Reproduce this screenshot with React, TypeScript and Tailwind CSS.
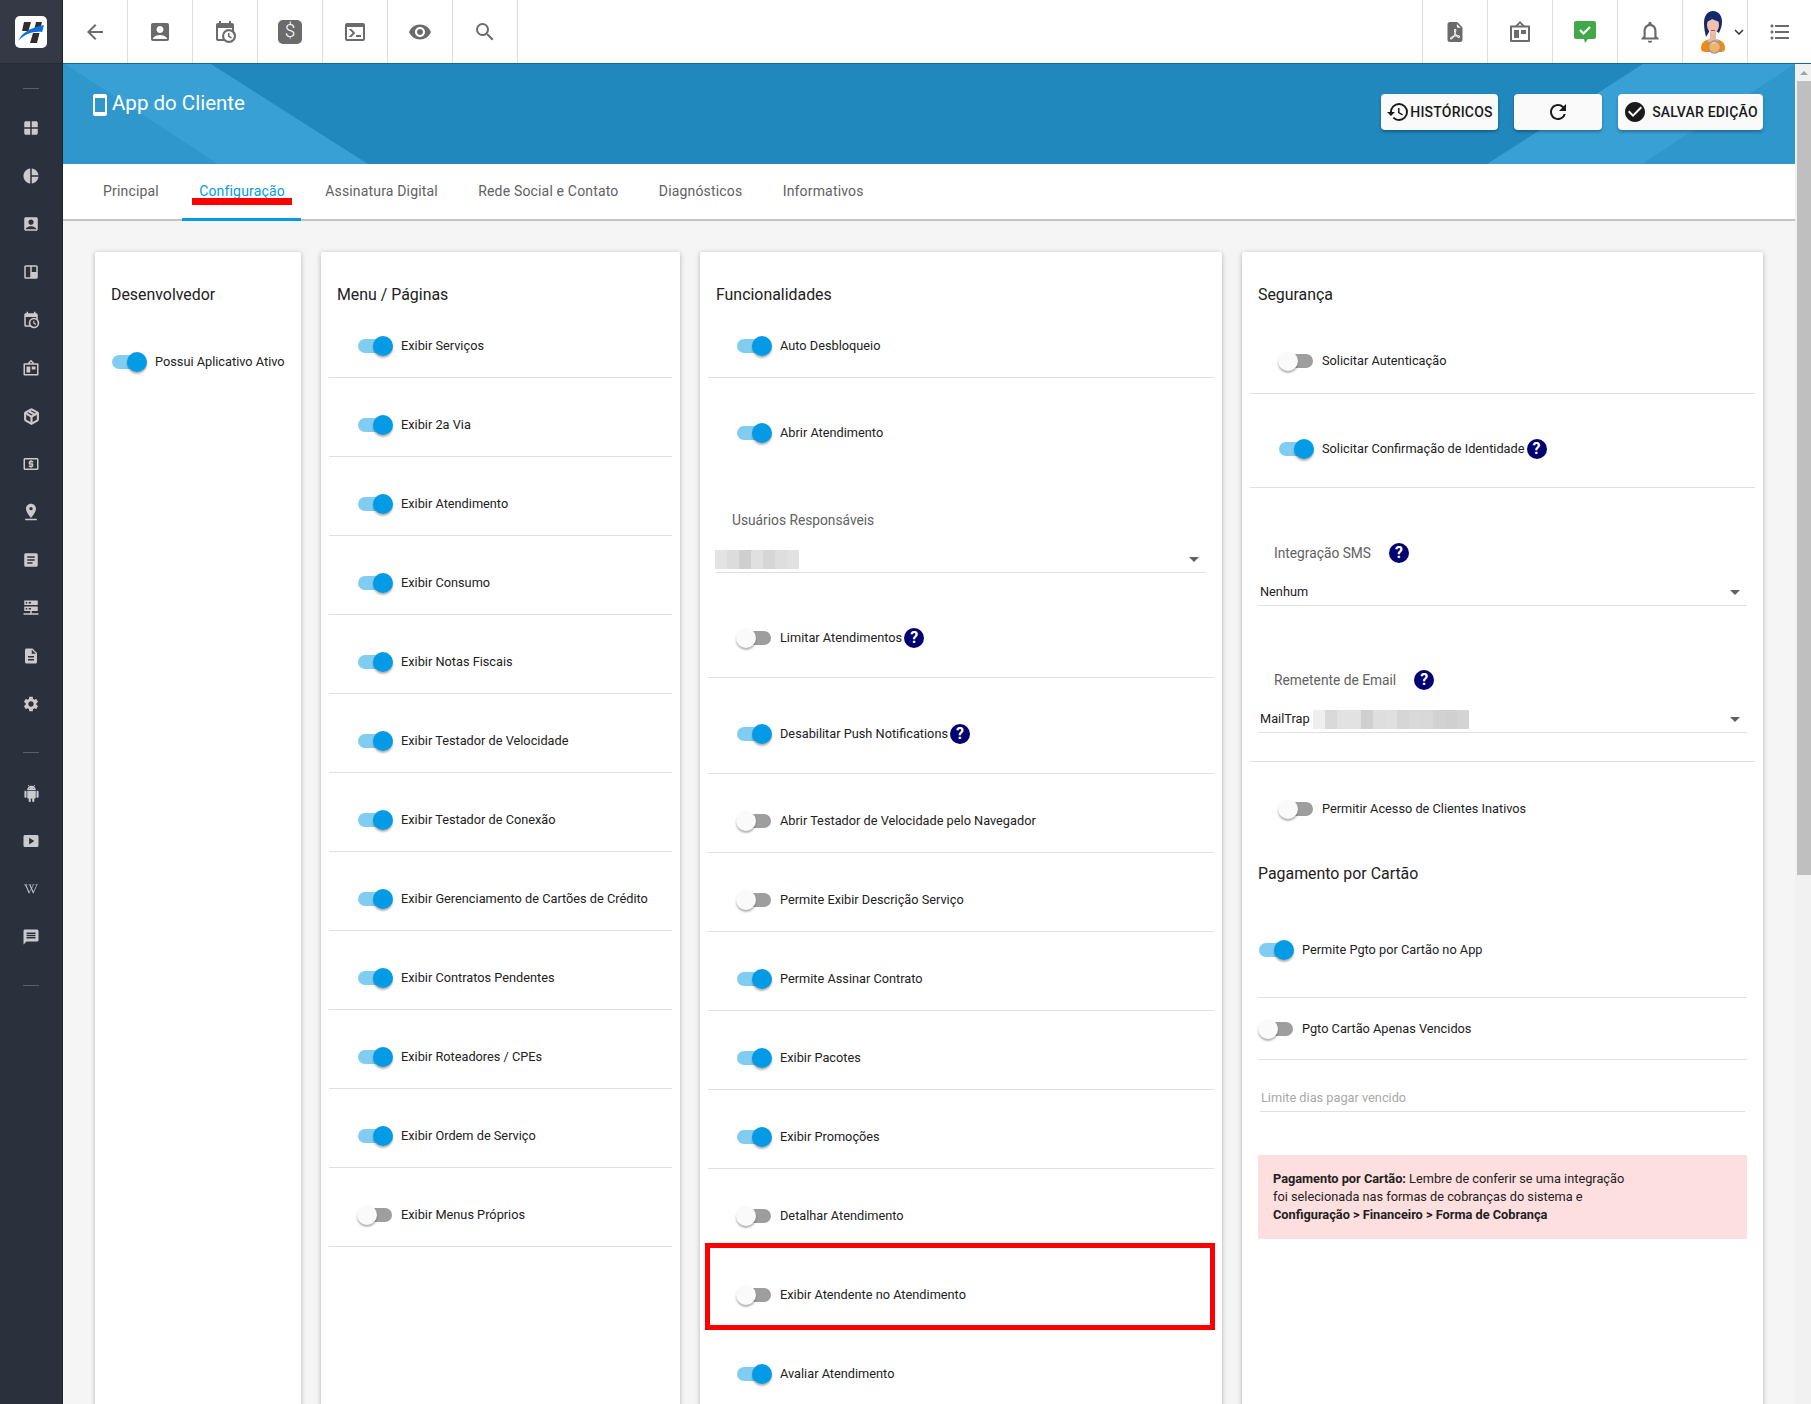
import {
  MdAccountBox,
  MdArrowBack,
  MdArticle,
  MdCheckCircle,
  MdDescription,
  MdFormatListBulleted,
  MdHistory,
  MdLocalAtm,
  MdMessage,
  MdNotificationsNone,
  MdPieChart,
  MdPinDrop,
  MdRefresh,
  MdSearch,
  MdSettings,
  MdSmartDisplay,
  MdSmartphone,
  MdVisibility,
  MdWindow,
} from "react-icons/md";
import { BsFileEarmarkPdfFill } from "react-icons/bs";
import { FaWikipediaW } from "react-icons/fa";
import { LuPackage } from "react-icons/lu";
import type { ReactNode } from "react";

type IconProps = { size?: number; className?: string };

function CalendarClockIcon({ size = 24, className }: IconProps) {
  return (
    <svg width={size} height={size} viewBox="0 0 24 24" fill="currentColor" className={className}>
      <path d="M15,13H16.5V15.82L18.94,17.23L18.19,18.53L15,16.69V13M19,8H5V19H9.67C9.24,18.09 9,17.07 9,16A7,7 0 0,1 16,9C17.07,9 18.09,9.24 19,9.67V8M5,21C3.89,21 3,20.1 3,19V5C3,3.89 3.89,3 5,3H6V1H8V3H16V1H18V3H19A2,2 0 0,1 21,5V11.1C22.24,12.36 23,14.09 23,16A7,7 0 0,1 16,23C14.09,23 12.36,22.24 11.1,21H5M16,11.15A4.85,4.85 0 0,0 11.15,16C11.15,18.68 13.32,20.85 16,20.85A4.85,4.85 0 0,0 20.85,16C20.85,13.32 18.68,11.15 16,11.15Z" />
    </svg>
  );
}

function ConsoleIcon({ size = 24, className }: IconProps) {
  return (
    <svg width={size} height={size} viewBox="0 0 24 24" fill="currentColor" className={className}>
      <path d="M20,19V7H4V19H20M20,3A2,2 0 0,1 22,5V19A2,2 0 0,1 20,21H4A2,2 0 0,1 2,19V5C2,3.89 2.9,3 4,3H20M13,17V15H18V17H13M9.58,13L5.57,9H8.4L11.7,12.3C12.09,12.69 12.09,13.33 11.7,13.72L8.42,17H5.59L9.58,13Z" />
    </svg>
  );
}

function BoardIcon({ size = 24, className }: IconProps) {
  return (
    <svg width={size} height={size} viewBox="0 0 24 24" fill="currentColor" className={className}>
      <path d="M12 1 16.5 5.5H21a1 1 0 0 1 1 1V21a1 1 0 0 1-1 1H3a1 1 0 0 1-1-1V6.500a1 1 0 0 1 1-1h4.500L12 1Zm0 2.600L10.100 5.500h3.800L12 3.600ZM4 7.500V20h16V7.500H4Z" />
      <path d="M6 10h5v8H6zM13 10h5v4h-5z" />
    </svg>
  );
}

function KanbanBoxIcon({ size = 24, className }: IconProps) {
  return (
    <svg width={size} height={size} viewBox="0 0 24 24" fill="currentColor" className={className}>
      <path d="M5 3h14a2 2 0 0 1 2 2v14a2 2 0 0 1-2 2H5a2 2 0 0 1-2-2V5a2 2 0 0 1 2-2Zm0 2v14h6V5H5Zm8 0v7h6V5h-6Z" />
    </svg>
  );
}

function ServerIcon({ size = 24, className }: IconProps) {
  return (
    <svg width={size} height={size} viewBox="0 0 24 24" fill="currentColor" className={className}>
      <path d="M3 2h18v6H3zM3 10h18v6H3zM11 16h2v3h9v2H2v-2h9z" />
      <path fill="#2b303d" d="M5 4h2v2H5zM9 4h3v2H9zM5 12h2v2H5zM9 12h3v2H9z" />
    </svg>
  );
}

function AndroidIcon({ size = 24, className }: IconProps) {
  return (
    <svg width={size} height={size} viewBox="0 0 24 24" fill="currentColor" className={className}>
      <path d="M6 18c0 .55.45 1 1 1h1v3.500c0 .83.67 1.500 1.500 1.500s1.500-.67 1.500-1.500V19h2v3.500c0 .83.67 1.500 1.500 1.500s1.500-.67 1.500-1.500V19h1c.55 0 1-.45 1-1V8H6v10zM3.500 8C2.670 8 2 8.670 2 9.500v7c0 .83.67 1.500 1.500 1.500S5 17.330 5 16.500v-7C5 8.670 4.330 8 3.500 8zm17 0c-.83 0-1.500.67-1.500 1.500v7c0 .83.67 1.500 1.500 1.500s1.500-.67 1.500-1.500v-7c0-.83-.67-1.500-1.500-1.500zm-4.970-5.840l1.300-1.300c.2-.2.2-.51 0-.71-.2-.2-.51-.2-.71 0l-1.480 1.480C13.850 1.230 12.950 1 12 1c-.96 0-1.860.23-2.660.63L7.850.15c-.2-.2-.51-.2-.71 0-.2.2-.2.51 0 .71l1.310 1.310C6.970 3.260 6 5.010 6 7h12c0-1.990-.97-3.750-2.470-4.840zM10 5H9V4h1v1zm5 0h-1V4h1v1z" />
    </svg>
  );
}

function ChatCheckIcon() {
  return (
    <svg width={24} height={24} viewBox="0 0 24 24">
      <path
        fill="#43a847"
        d="M3 1h18a2 2 0 0 1 2 2v14a2 2 0 0 1-2 2h-6l-3 4-1-4H3a2 2 0 0 1-2-2V3a2 2 0 0 1 2-2Z"
      />
      <path d="m7 10 3.500 3.500L17 7" fill="none" stroke="#fff" strokeWidth="2.200" />
    </svg>
  );
}

function AvatarIcon() {
  return (
    <svg width={26} height={44} viewBox="0 0 26 44">
      <path fill="#f08a12" d="M1 38c0-6 5-9 12-9s12 3 12 9c0 3-2 4-4 4H5c-2 0-4-1-4-4Z" />
      <path fill="#e8b9a5" d="M10 22h6v7l3 2-6 3-6-3 3-2z" />
      <path fill="#16296b" d="M13 1c6 0 9 5 9 11 0 5-2 8-3 11l-3-2V12H9v10l-3 5c-1-4-2-9-2-14C4 6 7 1 13 1Z" />
      <ellipse cx="13" cy="15" rx="6" ry="8" fill="#efc3ae" />
      <path fill="#16296b" d="M6 12c2-4 6-6 8-6 3 0 5 3 6 6-3-1-6-2-8-3-1 1-3 2-6 3Z" />
      <rect x="11" y="20" width="4" height="1" fill="#c8374a" />
      <circle cx="14.500" cy="37" r="6" fill="#ffffff" fillOpacity="0.35" stroke="#8a9aa0" strokeWidth="1.300" />
    </svg>
  );
}

function LogoMark() {
  return (
    <svg width={32} height={32} viewBox="0 0 32 32">
      <rect width="32" height="32" rx="5" fill="#ffffff" />
      <path fill="#2f2f31" d="M9 6h7l-2.500 9H7ZM18 17h6.500L22 27h-7Z" />
      <path fill="#2f2f31" d="M21 6h6l-1 4-6.500 2.500Z" />
      <path fill="#0f6fde" d="M3 25c4-8 11-13 26-16l-1.800 7C18 15 10 18 3 25Z" />
    </svg>
  );
}

function Toggle({ on }: { on: boolean }) {
  return (
    <span className="relative block h-[20px] w-[36px] shrink-0">
      <span
        className={`absolute left-[1px] top-[3px] h-[14px] w-[34px] rounded-full ${
          on ? "bg-[#81cdf2]" : "bg-[#9e9e9e]"
        }`}
      />
      <span
        className={`absolute top-0 h-[20px] w-[20px] rounded-full shadow-[0_2px_2px_rgba(0,0,0,0.3)] ${
          on ? "left-[16px] bg-[#039be5]" : "left-0 bg-[#fafafa]"
        }`}
      />
    </span>
  );
}

function Help({ className = "" }: { className?: string }) {
  return (
    <span
      className={`flex h-[20px] w-[20px] shrink-0 items-center justify-center rounded-full bg-[#000070] text-[16px] font-bold leading-none text-white ${className}`}
    >
      ?
    </span>
  );
}

function Row({
  label,
  on = false,
  help = false,
  size = "h-[79px] pt-[15px]",
  indent = "mx-[8px] pl-[28px]",
  border = true,
}: {
  label: string;
  on?: boolean;
  help?: boolean;
  size?: string;
  indent?: string;
  border?: boolean;
}) {
  return (
    <div className={`flex items-center ${size} ${indent} ${border ? "border-b border-[#e0e0e0]" : ""}`}>
      <Toggle on={on} />
      <span className="ml-[8px] text-[12.75px] text-[#212121]">{label}</span>
      {help ? <Help className="ml-[2px]" /> : null}
    </div>
  );
}

function Field({
  label,
  helpIcon = false,
  children,
}: {
  label: string;
  helpIcon?: boolean;
  children: ReactNode;
}) {
  return (
    <div>
      <div className="flex h-[24px] items-center pl-[32px] text-[13.75px] text-[#616161]">
        {label}
        {helpIcon ? <Help className="ml-[18px]" /> : null}
      </div>
      <div className="mx-[16px] mt-[5px] flex h-[36px] items-center border-b border-[#e0e0e0] pl-[2px] pr-[7px] pt-[9px] text-[12.75px] text-[#212121]">
        {children}
        <span className="ml-auto h-0 w-0 border-x-[5px] border-t-[5px] border-x-transparent border-t-[#616161]" />
      </div>
    </div>
  );
}

function Card({ title, children }: { title: string; children: ReactNode }) {
  return (
    <section className="rounded-[2px] bg-white pt-[31px] shadow-[0_1px_5px_rgba(0,0,0,0.28)]">
      <h2 className="mb-[-8px] h-[24px] pl-[16px] text-[15.9px] font-normal leading-[24px] text-[#212121]">
        {title}
      </h2>
      {children}
    </section>
  );
}

const menuRows = [
  { label: "Exibir Serviços", on: true },
  { label: "Exibir 2a Via", on: true },
  { label: "Exibir Atendimento", on: true },
  { label: "Exibir Consumo", on: true },
  { label: "Exibir Notas Fiscais", on: true },
  { label: "Exibir Testador de Velocidade", on: true },
  { label: "Exibir Testador de Conexão", on: true },
  { label: "Exibir Gerenciamento de Cartões de Crédito", on: true },
  { label: "Exibir Contratos Pendentes", on: true },
  { label: "Exibir Roteadores / CPEs", on: true },
  { label: "Exibir Ordem de Serviço", on: true },
  { label: "Exibir Menus Próprios", on: false },
];

const sideTop = [
  <MdWindow size={18} />,
  <MdPieChart size={18} />,
  <MdAccountBox size={18} />,
  <KanbanBoxIcon size={18} />,
  <CalendarClockIcon size={18} />,
  <BoardIcon size={18} />,
  <LuPackage size={17} strokeWidth={3} />,
  <MdLocalAtm size={18} />,
  <MdPinDrop size={20} />,
  <MdArticle size={18} />,
  <ServerIcon size={18} />,
  <MdDescription size={18} />,
  <MdSettings size={18} />,
];

const sideBottom = [
  <AndroidIcon size={17} />,
  <MdSmartDisplay size={18} />,
  <FaWikipediaW size={14} />,
  <MdMessage size={18} />,
];

const tabs = ["Principal", "Configuração", "Assinatura Digital", "Rede Social e Contato", "Diagnósticos", "Informativos"];

function Sidebar() {
  return (
    <aside className="flex w-[63px] shrink-0 flex-col bg-[#2b303d] pr-[1px] text-[#c9cacd] shadow-[inset_-1px_0_0_#1d2430]">
      <div className="flex h-[64px] items-center border-b border-[#262a35] bg-[#353945] pl-[15px]">
        <LogoMark />
      </div>
      <div className="mx-auto mt-[24px] h-px w-[16px] bg-[#5a5e69]" />
      <div className="mt-[15px]">
        {sideTop.map((icon, i) => (
          <div key={i} className="flex h-[48px] items-center justify-center">
            {icon}
          </div>
        ))}
      </div>
      <div className="mx-auto mt-[24px] h-px w-[16px] bg-[#5a5e69]" />
      <div className="mt-[16px]">
        {sideBottom.map((icon, i) => (
          <div key={i} className="flex h-[48px] items-center justify-center">
            {icon}
          </div>
        ))}
      </div>
      <div className="mx-auto mt-[24px] h-px w-[16px] bg-[#5a5e69]" />
    </aside>
  );
}

function TopCell({ children, left = false, width = "w-[65px]" }: { children: ReactNode; left?: boolean; width?: string }) {
  return (
    <div
      className={`flex h-full ${width} items-center justify-center border-[#dedede] text-[#6b6b6b] ${
        left ? "border-l" : "border-r"
      }`}
    >
      {children}
    </div>
  );
}

function TopBar() {
  return (
    <header className="flex h-[64px] shrink-0 items-stretch border-b border-[#0f6a98] bg-white">
      <TopCell>
        <MdArrowBack size={24} />
      </TopCell>
      <TopCell>
        <MdAccountBox size={24} />
      </TopCell>
      <TopCell>
        <CalendarClockIcon />
      </TopCell>
      <TopCell>
        <span className="flex h-[24px] w-[24px] items-center justify-center rounded-[5px] bg-[#6b6b6b] text-[19px] font-light text-white">
          $
        </span>
      </TopCell>
      <TopCell>
        <ConsoleIcon />
      </TopCell>
      <TopCell>
        <MdVisibility size={24} />
      </TopCell>
      <TopCell>
        <MdSearch size={24} />
      </TopCell>
      <div className="ml-auto flex">
        <TopCell left>
          <BsFileEarmarkPdfFill size={20} />
        </TopCell>
        <TopCell left>
          <BoardIcon />
        </TopCell>
        <TopCell left>
          <ChatCheckIcon />
        </TopCell>
        <TopCell left>
          <MdNotificationsNone size={26} />
        </TopCell>
        <TopCell left>
          <div className="relative flex w-full items-center pl-[17px]">
            <AvatarIcon />
            <svg width={10} height={6} viewBox="0 0 10 6" className="absolute right-[3px] top-[calc(50%-3px)]">
              <path d="m1 1 4 4 4-4" fill="none" stroke="#333" strokeWidth="1.500" />
            </svg>
          </div>
        </TopCell>
        <TopCell left width="w-[64px]">
          <MdFormatListBulleted size={24} />
        </TopCell>
      </div>
    </header>
  );
}

function PageHeader() {
  return (
    <div className="relative flex h-[100px] shrink-0 items-start overflow-hidden bg-[#2188bd]">
      <svg className="absolute inset-0 h-full w-full" viewBox="0 0 1732 100" preserveAspectRatio="none">
        <path d="M0 0H148L305 100H0Z" fill="#38a0d5" />
        <path d="M0 0H2L155 100H0Z" fill="#2f97cc" />
        <path d="M1580 0H1732V100H1424Z" fill="#38a0d5" />
        <path d="M1732 0V100H1579Z" fill="#2f97cc" />
      </svg>
      <div className="relative ml-[25px] mt-[28px] flex items-center text-white">
        <MdSmartphone size={24} />
        <h1 className="-mt-[3px] text-[20.5px] font-normal leading-[28px]">App do Cliente</h1>
      </div>
      <div className="relative ml-auto mr-[32px] mt-[30px] flex gap-[16px] text-[14px] font-medium tracking-[0.2px] text-[#1a1a1a]">
        <button className="flex h-[36px] w-[117px] items-center justify-center rounded-[4px] bg-[#fafafa] shadow-[0_2px_3px_rgba(0,0,0,0.3)]">
          <MdHistory size={24} />
          HISTÓRICOS
        </button>
        <button className="flex h-[36px] w-[88px] items-center justify-center rounded-[4px] bg-[#fafafa] shadow-[0_2px_3px_rgba(0,0,0,0.3)]">
          <MdRefresh size={24} />
        </button>
        <button className="flex h-[36px] w-[145px] items-center justify-center gap-[5px] rounded-[4px] bg-[#fafafa] shadow-[0_2px_3px_rgba(0,0,0,0.3)]">
          <MdCheckCircle size={24} />
          SALVAR EDIÇÃO
        </button>
      </div>
    </div>
  );
}

function Tabs() {
  return (
    <nav className="flex h-[57px] shrink-0 items-start gap-[40.3px] border-b-2 border-[#c4c4c4] bg-white pl-[40px] pt-[17px] text-[14px] leading-[20px] tracking-[0.17px] text-[#616161]">
      {tabs.map((tab) =>
        tab === "Configuração" ? (
          <span key={tab} className="relative text-[#039be5]">
            {tab}
            <span className="absolute left-[-7px] right-[-7px] top-[17px] h-[7px] bg-[#ff0000]" />
            <span className="absolute left-[-17px] right-[-16px] top-[37px] h-[3px] bg-[#039be5]" />
          </span>
        ) : (
          <span key={tab}>{tab}</span>
        ),
      )}
    </nav>
  );
}

function Blur({ shades }: { shades: string[] }) {
  return (
    <span className="flex h-[19px]">
      {shades.map((shade, i) => (
        <span key={i} className={`h-full w-[12px] ${shade}`} />
      ))}
    </span>
  );
}

function Content() {
  return (
    <main className="min-h-0 flex-1 overflow-hidden bg-[#f5f5f5] px-[32px] pt-[31px]">
      <div className="grid h-[1200px] grid-cols-[206px_359px_522px_521px] gap-[20px]">
        <Card title="Desenvolvedor">
          <Row label="Possui Aplicativo Ativo" on border={false} size="h-[95px] pt-[30px]" indent="pl-[16px]" />
        </Card>

        <Card title="Menu / Páginas">
          {menuRows.map((row) => (
            <Row key={row.label} label={row.label} on={row.on} />
          ))}
        </Card>

        <Card title="Funcionalidades">
          <Row label="Auto Desbloqueio" on />
          <Row label="Abrir Atendimento" on border={false} size="h-[110px]" />
          <div className="mt-[20px]">
            <Field label="Usuários Responsáveis">
              <span className="-ml-[3px]">
                <Blur shades={["bg-[#e3e3e3]", "bg-[#dcdcdc]", "bg-[#cfcfcf]", "bg-[#e0e0e0]", "bg-[#d6d6d6]", "bg-[#dedede]", "bg-[#e2e2e2]"]} />
              </span>
            </Field>
          </div>
          <Row label="Limitar Atendimentos" help size="h-[105px] pt-[26px]" />
          <Row label="Desabilitar Push Notifications" on help size="h-[96px] pt-[17px]" />
          <Row label="Abrir Testador de Velocidade pelo Navegador" />
          <Row label="Permite Exibir Descrição Serviço" />
          <Row label="Permite Assinar Contrato" on />
          <Row label="Exibir Pacotes" on />
          <Row label="Exibir Promoções" on />
          <Row label="Detalhar Atendimento" />
          <div className="relative">
            <Row label="Exibir Atendente no Atendimento" />
            <div className="absolute bottom-[-3px] left-[5px] right-[7px] top-[-5px] border-[5px] border-[#ff0000]" />
          </div>
          <Row label="Avaliar Atendimento" on />
        </Card>

        <Card title="Segurança">
          <Row label="Solicitar Autenticação" size="h-[95px] pt-[30px]" />
          <Row label="Solicitar Confirmação de Identidade" on help size="h-[94px] pt-[16px]" />
          <div className="mt-[53px]">
            <Field label="Integração SMS" helpIcon>
              Nenhum
            </Field>
          </div>
          <div className="mt-[62px]">
            <Field label="Remetente de Email" helpIcon>
              MailTrap
              <span className="ml-[3px]">
                <Blur shades={["bg-[#eeeeee]", "bg-[#d9d9d9]", "bg-[#e2e2e2]", "bg-[#e2e2e2]", "bg-[#cfcfcf]", "bg-[#dedede]", "bg-[#e0e0e0]", "bg-[#d6d6d6]", "bg-[#dadada]", "bg-[#d9d9d9]", "bg-[#d2d2d2]", "bg-[#d0d0d0]", "bg-[#d4d4d4]"]} />
              </span>
            </Field>
          </div>
          <div className="mx-[8px] mt-[28px] border-b border-[#e0e0e0]" />
          <Row label="Permitir Acesso de Clientes Inativos" border={false} size="h-[94px]" />
          <h2 className="ml-[16px] mt-[6px] h-[24px] text-[15.9px] font-normal leading-[24px] text-[#212121]">
            Pagamento por Cartão
          </h2>
          <Row label="Permite Pgto por Cartão no App" on size="h-[112px] pt-[17px]" indent="mx-[16px]" />
          <Row label="Pgto Cartão Apenas Vencidos" size="h-[62px]" indent="mx-[16px]" />
          <div className="mx-[18px] mt-[26px] h-[26px] border-b border-[#e0e0e0] pl-[1px] text-[12.75px] leading-[24px] text-[#a8a8a8]">
            Limite dias pagar vencido
          </div>
          <div className="mx-[16px] mt-[43px] h-[84px] bg-[#fddfdf] pl-[15px] pt-[15px] text-[12.75px] leading-[18px] text-[#212121]">
            <p>
              <b className="font-bold">Pagamento por Cartão:</b> Lembre de conferir se uma integração
            </p>
            <p>foi selecionada nas formas de cobranças do sistema e</p>
            <p className="font-bold">Configuração &gt; Financeiro &gt; Forma de Cobrança</p>
          </div>
        </Card>
      </div>
    </main>
  );
}

function Scrollbar() {
  return (
    <div className="flex w-[16px] shrink-0 flex-col bg-[#f1f1f1] pl-[2px]">
      <div className="flex h-[17px] items-center justify-center">
        <span className="h-0 w-0 border-x-[4px] border-b-[4px] border-x-transparent border-b-[#a3a3a3]" />
      </div>
      <div className="h-[794px] bg-[#bfbfbf]" />
    </div>
  );
}

export default function App() {
  return (
    <div className="flex h-[1404px] w-[1811px] overflow-hidden font-['Roboto',sans-serif]">
      <Sidebar />
      <div className="flex min-w-0 flex-1 flex-col">
        <TopBar />
        <div className="flex min-h-0 flex-1">
          <div className="flex min-w-0 flex-1 flex-col">
            <PageHeader />
            <Tabs />
            <Content />
          </div>
          <Scrollbar />
        </div>
      </div>
    </div>
  );
}
